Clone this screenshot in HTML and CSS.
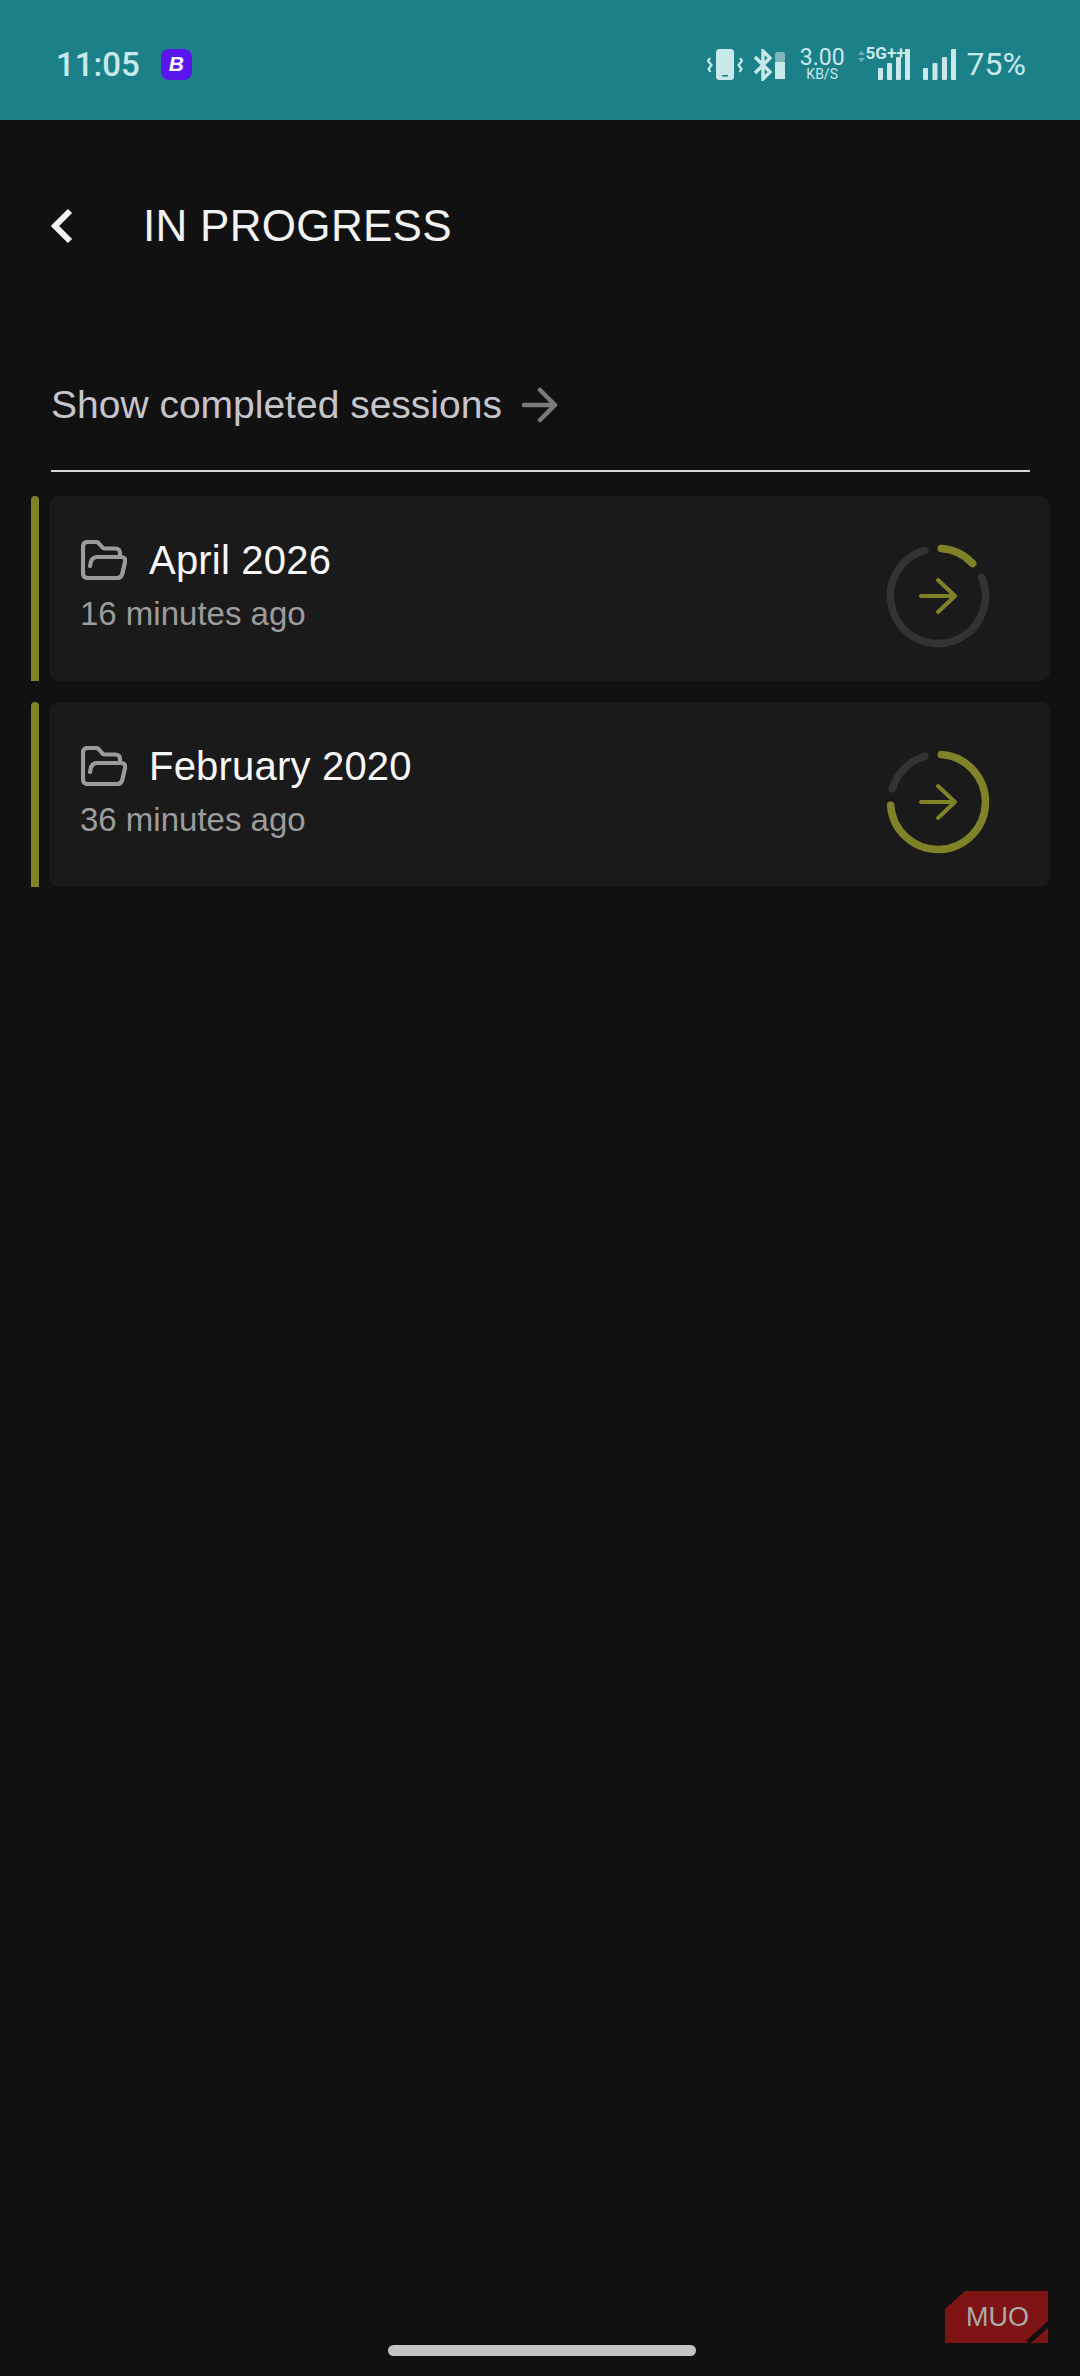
FILE: index.html
```html
<!DOCTYPE html>
<html>
<head>
  <meta charset="utf-8">
  <title>In progress</title>
  <link rel="stylesheet" href="styles.css">
</head>
<body>
  <div class="page">
    <div class="status-bar">
      <span class="clock">11:05</span>
      <span class="app-badge">B</span>
      <div class="status-icons">
        <svg class="ic-vibrate" width="36" height="32" viewBox="0 0 36 32">
          <rect x="9" y="0" width="18" height="31" rx="3.5" fill="#c9e8ea"/>
          <rect x="15" y="26" width="6" height="1.6" fill="#1c8089"/>
          <path d="M3 9 L1 12 L4.500 16 L1.500 20 L3.500 23 M33 9 L35 12 L31.500 16 L34.500 20 L32.500 23" fill="none" stroke="#c9e8ea" stroke-width="2.200"/>
        </svg>
        <svg class="ic-bt" width="33" height="32" viewBox="0 0 33 32">
          <path d="M2 8 L17 23 L10 30 V2 L17 9 L2 24" fill="none" stroke="#c9e8ea" stroke-width="3.400"/>
          <rect x="22" y="3" width="10" height="10" rx="2" fill="#7db5bb"/>
          <rect x="22" y="13" width="10" height="17" fill="#c9e8ea"/>
        </svg>
        <div class="speed">
          <span class="speed-num">3.00</span>
          <span class="speed-unit">KB/S</span>
        </div>
        <div class="net-5g">
          <span class="net-label">5G++</span>
          <svg width="52" height="32" viewBox="0 0 52 32">
            <path d="M0 6 L3.500 2 L7 6 Z M0 9 L3.500 13 L7 9 Z" fill="#6fb0b6"/>
            <rect x="20" y="19" width="5" height="12" rx="1" fill="#c9e8ea"/>
            <rect x="29" y="14" width="5" height="17" rx="1" fill="#c9e8ea"/>
            <rect x="38" y="8" width="5" height="23" rx="1" fill="#c9e8ea"/>
            <rect x="47" y="0" width="5" height="31" rx="1" fill="#c9e8ea"/>
          </svg>
        </div>
        <svg class="ic-signal" width="33" height="32" viewBox="0 0 33 32">
          <rect x="0" y="19" width="5" height="12" rx="1" fill="#c9e8ea"/>
          <rect x="9.500" y="14" width="5" height="17" rx="1" fill="#c9e8ea"/>
          <rect x="19" y="8" width="5" height="23" rx="1" fill="#c9e8ea"/>
          <rect x="28" y="0" width="5" height="31" rx="1" fill="#c9e8ea"/>
        </svg>
        <span class="battery">75%</span>
      </div>
    </div>

    <div class="top-nav">
      <svg class="back" width="22" height="38" viewBox="0 0 22 38">
        <path d="M19 4 L4 19 L19 34" fill="none" stroke="#f2f2f2" stroke-width="6"/>
      </svg>
      <h1 class="title">IN PROGRESS</h1>
    </div>

    <div class="show-row">
      <span class="show-text">Show completed sessions</span>
      <svg width="36" height="36" viewBox="0 0 36 36">
        <path d="M2 18 H33 M18 3 L33 18 L18 33" fill="none" stroke="#7a7a7a" stroke-width="4.500" stroke-linecap="round" stroke-linejoin="round"/>
      </svg>
    </div>
    <div class="divider"></div>

    <div class="session-list">
      <div class="session">
        <div class="session-bar"></div>
        <div class="card">
          <div class="card-info">
            <div class="card-head">
              <svg class="folder" width="46" height="40" viewBox="0 0 46 40">
                <path d="M9 26 Q10 17 16 17 H40 Q45 17 44 22 L41.500 33 Q40.500 38 36 38 H7 Q2 38 2 33 V7 Q2 2 7 2 H15 Q17 2 18 3.500 L21 7 Q22 8.500 24 8.500 H34 Q39 8.500 39 13 V17" fill="none" stroke="#9b9b9b" stroke-width="4.200" stroke-linecap="round" stroke-linejoin="round"/>
              </svg>
              <span class="card-name">April 2026</span>
            </div>
            <div class="card-time">16 minutes ago</div>
          </div>
          <svg class="progress" width="110" height="110" viewBox="0 0 110 110">
            <path d="M98.700 36.400 A47.500 47.500 0 1 1 41.900 9.300" class="ring-off"/>
            <path d="M58.300 7.600 A47.500 47.500 0 0 1 89.700 22.600" class="ring-on"/>
            <path d="M38 55 H72 M55 39 L72 55 L55 71" class="ring-arrow"/>
          </svg>
        </div>
      </div>

      <div class="session">
        <div class="session-bar"></div>
        <div class="card">
          <div class="card-info">
            <div class="card-head">
              <svg class="folder" width="46" height="40" viewBox="0 0 46 40">
                <path d="M9 26 Q10 17 16 17 H40 Q45 17 44 22 L41.500 33 Q40.500 38 36 38 H7 Q2 38 2 33 V7 Q2 2 7 2 H15 Q17 2 18 3.500 L21 7 Q22 8.500 24 8.500 H34 Q39 8.500 39 13 V17" fill="none" stroke="#9b9b9b" stroke-width="4.200" stroke-linecap="round" stroke-linejoin="round"/>
              </svg>
              <span class="card-name">February 2020</span>
            </div>
            <div class="card-time">36 minutes ago</div>
          </div>
          <svg class="progress" width="110" height="110" viewBox="0 0 110 110">
            <path d="M9.300 41.900 A47.500 47.500 0 0 1 41.900 9.300" class="ring-off"/>
            <path d="M58.300 7.600 A47.500 47.500 0 1 1 7.600 58.300" class="ring-on"/>
            <path d="M38 55 H72 M55 39 L72 55 L55 71" class="ring-arrow"/>
          </svg>
        </div>
      </div>
    </div>

    <div class="home-pill"></div>

    <div class="watermark">
      <span class="watermark-text">MUO</span>
      <div class="watermark-slash"></div>
    </div>
  </div>
</body>
</html>
```

FILE: styles.css
```css
* {
  box-sizing: border-box;
}

html, body {
  margin: 0;
  padding: 0;
  background: #111112;
}

.page {
  position: relative;
  display: flex;
  flex-direction: column;
  width: 1080px;
  height: 2376px;
  overflow: hidden;
  background: #111112;
  font-family: "Liberation Sans", Arial, sans-serif;
}

/* Status bar */
.status-bar {
  display: flex;
  align-items: center;
  height: 120px;
  padding: 8px 54px 0 56px;
  background: #1c8089;
  color: #c9e8ea;
}

.clock {
  font-family: Roboto, sans-serif;
  font-size: 33px;
  font-weight: 500;
}

.app-badge {
  display: flex;
  align-items: center;
  justify-content: center;
  width: 31px;
  height: 31px;
  margin-left: 21px;
  border-radius: 8px;
  background: #5a14ee;
  color: #fff;
  font-size: 21px;
  font-weight: bold;
  font-style: italic;
}

.status-icons {
  display: flex;
  align-items: center;
  margin-left: auto;
}

.status-icons svg {
  display: block;
  margin-top: 1px;
}

.ic-bt {
  margin-left: 10px;
}

.speed {
  display: flex;
  flex-direction: column;
  align-items: center;
  margin-left: 14px;
  font-family: Roboto, sans-serif;
}

.speed-num {
  font-size: 23px;
  line-height: 20px;
}

.speed-unit {
  font-size: 14px;
  line-height: 13px;
}

.net-5g {
  position: relative;
  margin-left: 13px;
}

.net-label {
  position: absolute;
  top: -5px;
  left: 8px;
  font-family: Roboto, sans-serif;
  font-size: 17px;
  font-weight: bold;
}

.ic-signal {
  margin-left: 13px;
}

.battery {
  margin-left: 11px;
  font-family: Roboto, sans-serif;
  font-size: 32px;
}

/* Header */
.top-nav {
  display: flex;
  align-items: center;
  height: 212px;
}

.back {
  margin-left: 51px;
}

.title {
  margin: 0 0 0 70px;
  color: #f2f2f2;
  font-size: 44px;
  font-weight: normal;
  letter-spacing: 0.3px;
}

.show-row {
  display: flex;
  align-items: center;
  gap: 20px;
  height: 44px;
  margin-left: 51px;
  margin-top: 51px;
}

.show-text {
  color: #c6c5cc;
  font-size: 39px;
}

.divider {
  height: 2px;
  margin: 43px 50px 0 51px;
  background: #d8d8d8;
}

/* Sessions */
.session-list {
  display: flex;
  flex-direction: column;
  gap: 21px;
  margin: 24px 30px 0 31px;
}

.session {
  display: flex;
  gap: 10px;
  height: 185px;
}

.session-bar {
  flex: none;
  width: 8px;
  border-radius: 4px 4px 0 0;
  background: #7f8226;
}

.card {
  display: flex;
  flex: 1;
  align-items: center;
  justify-content: space-between;
  padding: 0 57px 0 31px;
  border-radius: 10px;
  background: #1a1a1b;
}

.card-info {
  padding-bottom: 7px;
}

.card-head {
  display: flex;
  align-items: center;
  gap: 22px;
}

.card-name {
  color: #f7f7f7;
  font-size: 40px;
  letter-spacing: 0.2px;
}

.card-time {
  margin-top: 12px;
  color: #9c9c9c;
  font-size: 33px;
}

.folder {
  flex: none;
  margin-left: 1px;
}

.progress {
  margin-top: 14px;
}

.ring-off,
.ring-on,
.ring-arrow {
  fill: none;
  stroke-linecap: round;
  stroke-linejoin: round;
}

.ring-off {
  stroke: #333334;
  stroke-width: 7.5;
}

.ring-on {
  stroke: #7f8226;
  stroke-width: 7.5;
}

.ring-arrow {
  stroke: #7f8226;
  stroke-width: 4;
}

/* Bottom */
.home-pill {
  width: 308px;
  height: 11px;
  margin: auto 0 20px 388px;
  border-radius: 6px;
  background: #c4c4c4;
}

.watermark {
  position: absolute;
  left: 945px;
  top: 2291px;
  display: flex;
  align-items: center;
  justify-content: center;
  width: 103px;
  height: 52px;
  background: #7e1414;
  clip-path: polygon(20px 0, 103px 0, 103px 52px, 0 52px, 0 18px);
}

.watermark-text {
  color: #ababab;
  font-size: 27px;
  margin-left: 2px;
}

.watermark-slash {
  position: absolute;
  right: -6px;
  bottom: 8px;
  width: 30px;
  height: 5px;
  background: #111112;
  transform: rotate(-42deg);
}
```
